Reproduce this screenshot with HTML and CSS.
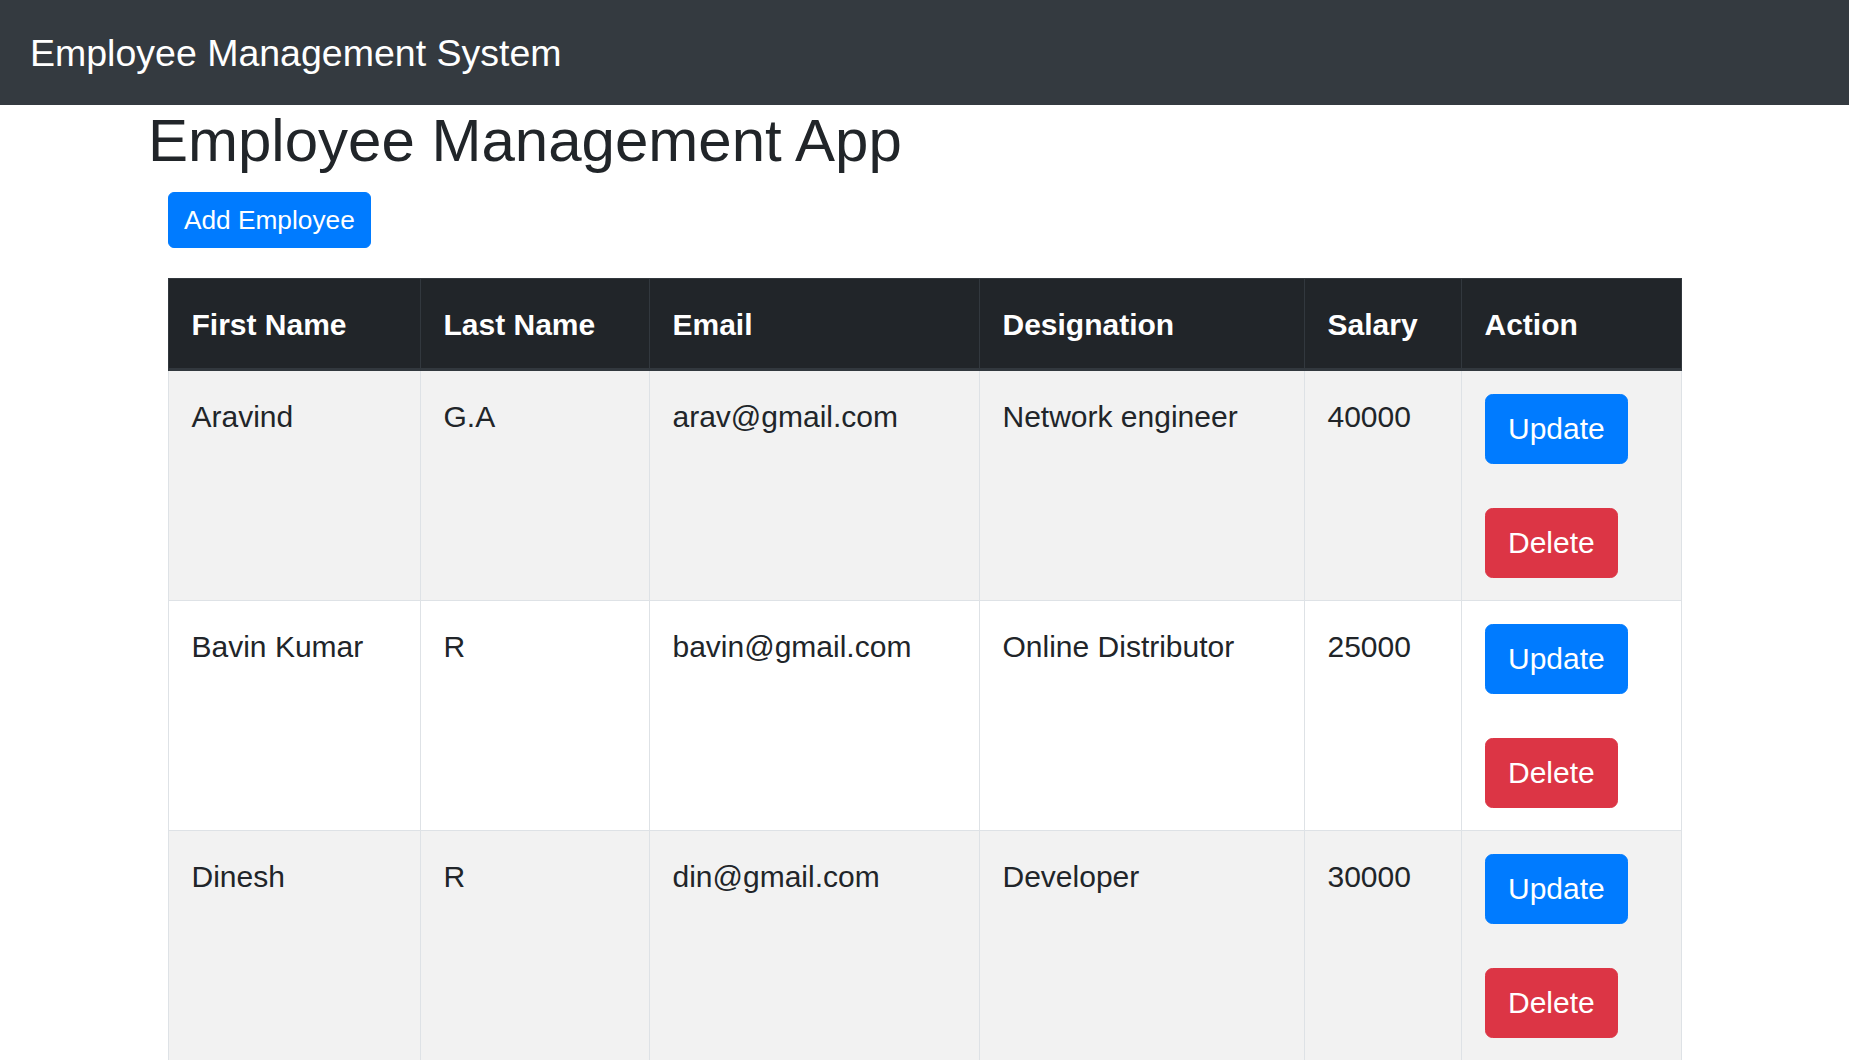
FILE: index.html
```html
<!DOCTYPE html>
<html lang="en">
<head>
<meta charset="utf-8">
<title>Employee Management System</title>
<link rel="stylesheet" href="styles.css">
</head>
<body>
<nav class="navbar"><span class="brand">Employee Management System</span></nav>
<main class="page">
  <h1 class="title">Employee Management App</h1>
  <div class="content">
    <div class="toolbar"><button class="btn btn-primary btn-sm">Add Employee</button></div>
    <table class="emp-table">
      <colgroup>
        <col class="c-first">
        <col class="c-last">
        <col class="c-email">
        <col class="c-desig">
        <col class="c-salary">
        <col class="c-action">
      </colgroup>
      <thead>
        <tr>
          <th>First Name</th>
          <th>Last Name</th>
          <th>Email</th>
          <th>Designation</th>
          <th>Salary</th>
          <th>Action</th>
        </tr>
      </thead>
      <tbody>
        <tr>
          <td>Aravind</td>
          <td>G.A</td>
          <td>arav@gmail.com</td>
          <td>Network engineer</td>
          <td>40000</td>
          <td><div class="actions"><button class="btn btn-primary">Update</button><button class="btn btn-danger">Delete</button></div></td>
        </tr>
        <tr>
          <td>Bavin Kumar</td>
          <td>R</td>
          <td>bavin@gmail.com</td>
          <td>Online Distributor</td>
          <td>25000</td>
          <td><div class="actions"><button class="btn btn-primary">Update</button><button class="btn btn-danger">Delete</button></div></td>
        </tr>
        <tr>
          <td>Dinesh</td>
          <td>R</td>
          <td>din@gmail.com</td>
          <td>Developer</td>
          <td>30000</td>
          <td><div class="actions"><button class="btn btn-primary">Update</button><button class="btn btn-danger">Delete</button></div></td>
        </tr>
      </tbody>
    </table>
  </div>
</main>
</body>
</html>
```

FILE: styles.css
```css
html {
  overflow: hidden;
}

body {
  margin: 0;
  font-family: "Liberation Sans", Arial, sans-serif;
  font-size: 30px;
  line-height: 1.5;
  color: #212529;
  background: #fff;
}

.navbar {
  height: 105px;
  box-sizing: border-box;
  background: #343a40;
  display: flex;
  align-items: center;
  padding: 0 30px;
}

.brand {
  color: #fff;
  font-size: 37.5px;
  line-height: 56px;
}

.page {
  margin: 0 148px;
}

.title {
  margin: 0 0 15px;
  font-size: 60px;
  font-weight: 400;
  line-height: 72px;
}

.content {
  padding: 0 20px;
}

.toolbar {
  margin-bottom: 30px;
}

.btn {
  display: inline-block;
  font-family: inherit;
  font-size: 30px;
  line-height: 45px;
  padding: 11.5px 22.5px;
  border: 1px solid transparent;
  border-radius: 7.5px;
  color: #fff;
  cursor: pointer;
}

.btn-sm {
  font-size: 26.25px;
  line-height: 39.4px;
  padding: 7.5px 15px;
  border-radius: 6px;
}

.btn-primary {
  background: #007bff;
  border-color: #007bff;
}

.btn-danger {
  background: #dc3545;
  border-color: #dc3545;
}

.emp-table {
  width: 100%;
  border-collapse: collapse;
  table-layout: fixed;
}

.c-first { width: 252px; }
.c-last { width: 229px; }
.c-email { width: 330px; }
.c-desig { width: 325px; }
.c-salary { width: 157px; }
.c-action { width: 220px; }

.emp-table th {
  background: #212529;
  color: #fff;
  font-weight: 700;
  text-align: left;
  line-height: 45px;
  padding: 23px 22.5px 21px;
  border: 1px solid #32383e;
  border-bottom: 3px solid #32383e;
}

.emp-table td {
  line-height: 45px;
  padding: 22.5px;
  border: 1px solid #dee2e6;
  vertical-align: top;
}

.emp-table tbody tr:nth-child(odd) td {
  background: #f2f2f2;
}

.actions {
  display: flex;
  flex-direction: column;
  align-items: flex-start;
  gap: 44px;
}
```
